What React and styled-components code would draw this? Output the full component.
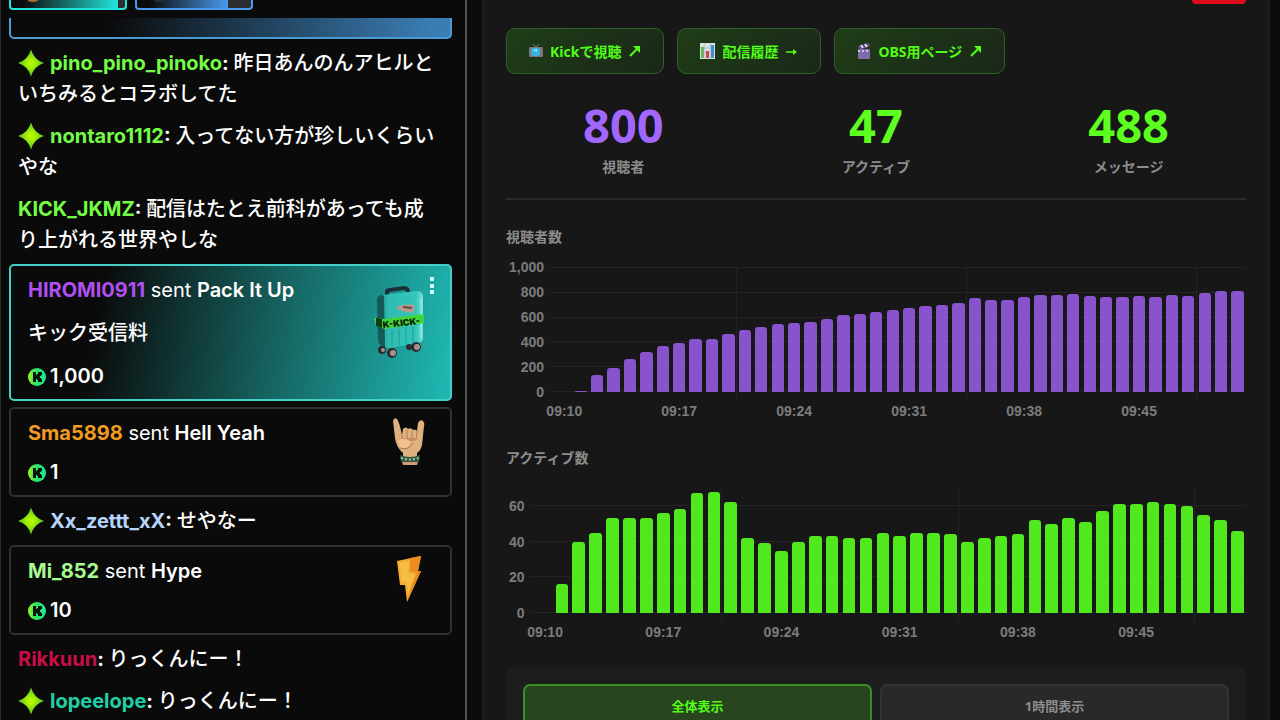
import React from 'react';
import styled, { createGlobalStyle } from 'styled-components';

const GlobalStyle = createGlobalStyle`
  * {
    box-sizing: border-box;
  }

  body {
    margin: 0;
    background: #0b0b0d;
    overflow: hidden;
  }
`;

const Page = styled.div`
  display: flex;
  height: 100vh;
  overflow: hidden;
`;

/* chat column */

const Chat = styled.aside`
  flex: 0 0 467px;
  display: flex;
  flex-direction: column;
  height: 100%;
  overflow: hidden;
  padding: 0 13px 0 8px;
  background: #0a0a0a;
  border-left: 1px solid #2a2a2c;
  border-right: 2px solid #515154;
  color: #fff;
  font-family: Inter, 'Noto Sans CJK JP', sans-serif;
  font-size: 20px;
  line-height: 31px;
`;

const PinRow = styled.div`
  display: flex;
  flex: none;
  gap: 8px;
  height: 10px;
`;

const Pin = styled.div`
  display: flex;
  align-items: flex-end;
  width: 118px;
  overflow: hidden;
  border: 2px solid ${({ $color }) => $color};
  border-top: 0;
  border-radius: 0 0 4px 4px;
  background: linear-gradient(to right, #0a0a0a 10%, ${({ $color }) => $color} ${({ $fill }) => $fill}%, #2b2d31 ${({ $fill }) => $fill}%);
`;

const PinAvatar = styled.span`
  width: 14px;
  height: 6px;
  margin: 0 0 6px 15px;
  border-radius: 0 0 7px 7px;
  background: ${({ $color }) => $color};
`;

const CutCard = styled.div`
  flex: none;
  height: 21px;
  margin: 8px 0 3px;
  border: 2px solid #4a9bd4;
  border-top: 0;
  border-radius: 0 0 5px 5px;
  background: linear-gradient(to right, #0a0a0a 22%, #3a7db4 96%);
`;

const Message = styled.p`
  flex: none;
  margin: 0;
  padding: 6px 9px 5px;
  font-weight: 500;
`;

const Name = styled.span`
  color: ${({ $color }) => $color};
  font-weight: 700;
`;

const Colon = styled.span`
  font-weight: 700;
`;

const Star = styled.svg`
  width: 26px;
  height: 28px;
  margin-right: 6px;
  vertical-align: -7px;
`;

const Gift = styled.article`
  flex: none;
  display: flex;
  justify-content: space-between;
  margin: 3px 0;
  padding: 9px 16px 7px 17px;
  border: 2px solid ${({ $featured }) => ($featured ? '#45cfc8' : '#303032')};
  border-radius: 5px;
  background: ${({ $featured }) => ($featured ? 'linear-gradient(100deg, #0a0a0a 20%, #155e5b 58%, #1fb5b0 98%)' : 'transparent')};
`;

const GiftText = styled.div`
  display: flex;
  flex-direction: column;
  gap: ${({ $wide }) => ($wide ? 12 : 8)}px;

  p {
    margin: 0;
    font-weight: 500;
  }

  strong {
    font-weight: 600;
  }
`;

const Sent = styled.span`
  font-weight: 400;
`;

const Amount = styled.p`
  display: flex;
  align-items: center;
  gap: 4px;

  && {
    font-weight: 600;
  }
`;

const GiftArt = styled.div`
  display: flex;
  justify-content: center;
  min-width: 50px;

  svg {
    flex: none;
  }
`;

const FeaturedArt = styled.div`
  display: flex;
  align-items: flex-start;
  gap: 4px;

  > svg {
    flex: none;
    margin-top: 11px;
  }
`;

const MoreButton = styled.button`
  display: flex;
  padding: 2px 0;
  border: 0;
  background: none;
`;

/* stats column */

const Main = styled.main`
  flex: 1;
  min-width: 0;
  padding: 0 10px 0 15px;
`;

const Panel = styled.section`
  display: flex;
  flex-direction: column;
  height: 100%;
  padding: 0 23px;
  border: solid #222;
  border-width: 0 1px;
  background: #171717;
  color: #8c8c8c;
  font-family: 'Noto Sans', 'Noto Sans CJK JP', sans-serif;
  font-size: 14px;
  font-weight: 700;
`;

const LiveBadge = styled.div`
  flex: none;
  align-self: flex-end;
  width: 54px;
  height: 4px;
  border-radius: 0 0 5px 5px;
  background: #e00b1c;
`;

const Links = styled.nav`
  display: flex;
  gap: 13px;
  margin-top: 24px;
`;

const LinkButton = styled.a`
  display: flex;
  align-items: center;
  gap: 7px;
  height: 46px;
  padding: 0 22px;
  border: 1px solid #30602a;
  border-radius: 9px;
  background: linear-gradient(135deg, #1f3d17, #1a2718);
  color: #53fc18;
  text-decoration: none;
  white-space: nowrap;
`;

const Arrow = styled.svg`
  width: 12px;
  height: 12px;
  margin-left: 1px;
`;

const Stats = styled.dl`
  display: grid;
  grid-template-columns: repeat(3, 1fr);
  gap: 18px;
  margin: 22px 0 0;
  padding-bottom: 20px;
  border-bottom: 2px solid #2a2a2a;
  text-align: center;
`;

const Stat = styled.div`
  display: flex;
  flex-direction: column-reverse;

  dt {
    line-height: 22px;
  }

  dd {
    margin: 0 0 2px;
    color: ${({ $color }) => $color};
    font-size: 47px;
    line-height: 58px;
  }
`;

const ChartTitle = styled.h2`
  margin: 26px 0 19px;
  color: #8c8c8c;
  font-size: 14px;
  line-height: 22px;
`;

const Chart = styled.div`
  display: grid;
  grid-template-columns: auto 1fr;
  grid-template-rows: 125px auto;
  column-gap: 12px;
  color: #7c7c7c;
  font-family: 'Liberation Sans', sans-serif;
  font-size: 14px;
  padding-left: 3px;
`;

const Scale = styled.div`
  display: flex;
  flex-direction: column;
  text-align: right;
`;

const ScaleStep = styled.div`
  flex: ${({ $size }) => $size} 0 0;
  line-height: 0;
`;

const Plot = styled.div`
  display: grid;

  > * {
    grid-area: 1 / 1;
  }
`;

const GridRows = styled.div`
  display: flex;
  flex-direction: column;
  margin-left: -7px;
`;

const GridRow = styled.div`
  flex: ${({ $size }) => $size} 0 0;
  border-top: ${({ $line }) => ($line ? '1px solid #232323' : '0')};
`;

const Columns = styled.div`
  display: flex;
`;

const Slot = styled.div`
  flex: 1 0 0;
  display: flex;
  align-items: flex-end;
  justify-content: center;
`;

const GuideSlot = styled.div`
  flex: 1 0 0;
  margin-bottom: -8px;
  box-shadow: ${({ $line }) => ($line ? '-1px 0 #232323' : 'none')};
`;

const Bar = styled.div`
  width: 75%;
  border-radius: 3px 3px 0 0;
  background: ${({ $color }) => $color};
`;

const TimeAxis = styled.div`
  grid-column: 2;
  display: flex;
  padding-top: 9px;
  line-height: 20px;
`;

const TimeSlot = styled.div`
  flex: 1 0 0;
  width: 0;
  display: flex;
  justify-content: center;
  white-space: nowrap;
`;

const RangeBox = styled.div`
  flex: none;
  display: flex;
  gap: 8px;
  margin-top: 25px;
  padding: 17px 17px 24px;
  border-radius: 8px;
  background: #1d1d1d;
`;

const RangeButton = styled.button`
  flex: 1;
  height: 42px;
  border: 2px solid ${({ $active }) => ($active ? '#388f20' : '#343434')};
  border-radius: 7px;
  background: ${({ $active }) => ($active ? '#28451f' : '#292929')};
  color: ${({ $active }) => ($active ? '#53fc18' : '#8c8c8c')};
  font: inherit;
  font-size: 13px;
`;

const viewers = [
  0, 6, 139, 195, 264, 317, 368, 392, 421, 421, 467, 493, 520, 541, 555, 563, 581, 616, 627, 637, 659,
  672, 685, 699, 712, 749, 739, 739, 763, 773, 773, 781, 771, 763, 763, 768, 763, 773, 771, 789, 807, 807,
];

const active = [
  0, 16, 40, 45, 53, 53, 53, 56, 58, 67, 68, 62, 42, 39, 35, 40, 43, 43, 42, 42, 45,
  43, 45, 45, 44, 40, 42, 43, 44, 52, 50, 53, 51, 57, 61, 61, 62, 61, 60, 55, 52, 46,
];

const timeLabel = (index) => `09:${10 + index}`;

const BarChart = ({ data, color, max, step }) => {
  const ticks = [];
  for (let value = Math.floor(max / step) * step; value >= 0; value -= step) {
    ticks.push(value);
  }
  const rest = max - ticks[0];

  return (
    <Chart>
      <Scale>
        {rest > 0 ? <ScaleStep $size={rest} /> : ''}
        {ticks.map((value) => (
          <ScaleStep key={value} $size={value === 0 ? 0 : step}>{value.toLocaleString('en-US')}</ScaleStep>
        ))}
      </Scale>
      <Plot>
        <GridRows>
          {rest > 0 ? <GridRow $size={rest} /> : ''}
          {ticks.map((value) => (
            <GridRow key={value} $line $size={value === 0 ? 0 : step} />
          ))}
        </GridRows>
        <Columns>
          {data.map((value, index) => (
            <GuideSlot key={timeLabel(index)} $line={index % 14 === 11} />
          ))}
        </Columns>
        <Columns>
          {data.map((value, index) => (
            <Slot key={timeLabel(index)}>
              <Bar $color={color} style={{ height: `${(value / max) * 100}%` }} />
            </Slot>
          ))}
        </Columns>
      </Plot>
      <TimeAxis>
        {data.map((value, index) => (
          <TimeSlot key={timeLabel(index)}>{index % 7 === 0 ? timeLabel(index) : ''}</TimeSlot>
        ))}
      </TimeAxis>
    </Chart>
  );
};

const StarBadge = () => (
  <Star viewBox="0 0 26 28">
    <defs>
      <radialGradient id="star">
        <stop offset="0.2" stopColor="#b4f500" />
        <stop offset="1" stopColor="#4fc52a" />
      </radialGradient>
    </defs>
    <path d="M13 0.5 Q16 11 26 14 Q16 17 13 27.5 Q10 17 0 14 Q10 11 13 0.5Z" fill="url(#star)" />
  </Star>
);

const Coin = () => (
  <svg width="18" height="18" viewBox="0 0 18 18">
    <defs>
      <linearGradient id="coin">
        <stop offset="0" stopColor="#a4f02c" />
        <stop offset="0.4" stopColor="#2fe95c" />
        <stop offset="1" stopColor="#1be3a2" />
      </linearGradient>
    </defs>
    <circle cx="9" cy="9" r="9" fill="url(#coin)" />
    <path d="M5 4h3v3h1V6h1V4h4v3h-1v1h-1v2h1v1h1v3h-4v-2H9v-1H8v3H5Z" fill="#07150b" />
  </svg>
);

const Suitcase = () => (
  <svg width="52" height="72" viewBox="0 0 52 72">
    <defs>
      <linearGradient id="shell">
        <stop offset="0" stopColor="#1c8f88" />
        <stop offset="0.25" stopColor="#2fbcb1" />
        <stop offset="0.85" stopColor="#33c6bb" />
        <stop offset="1" stopColor="#7ce0d6" />
      </linearGradient>
    </defs>
    <path d="M13 10V6q0-2 3-2l14-2q4 0 4 4" fill="none" stroke="#1b3036" strokeWidth="4" />
    <path d="M3 14q0-5 5-5l35-4q6 0 6 6v41q0 4-5 5l-28 5q-4 0-8-2-4-2-4-6Z" fill="url(#shell)" />
    <path d="M3 14q0-5 5-5l2 1 1 51q-6-1-7-6Z" fill="#125b57" />
    <path d="M18 44v16M25 43v16M32 41v16M39 40v16" stroke="#219a92" strokeWidth="1" />
    <path d="M47 12v40" stroke="#a4eee6" strokeWidth="1" />
    <path d="M23 20l15-2 3 3-2 6-7-1-9-3Z" fill="#b59c8f" />
    <path d="M29 21l9 1" stroke="#5e4844" strokeWidth="2" />
    <path d="M0 32l10 1 40-5v9l-39 6-9-3Z" fill="#41d637" />
    <path d="M2 32l6 1v9l-6-2Z" fill="#0d3c19" />
    <text x="9" y="42" transform="rotate(-6 9 42)" fill="#0b2110" fontFamily="Inter, sans-serif" fontSize="9" fontWeight="900">K-KICK-</text>
    <g fill="#282c30">
      <ellipse cx="8" cy="64" rx="4" ry="4" />
      <ellipse cx="18" cy="67" rx="5" ry="5" />
      <ellipse cx="35" cy="61" rx="3" ry="3" />
      <ellipse cx="42" cy="61" rx="5" ry="5" />
    </g>
    <g fill="#a4928b">
      <circle cx="9" cy="64" r="2" />
      <circle cx="19" cy="67" r="3" />
      <circle cx="43" cy="61" r="3" />
    </g>
  </svg>
);

const Horns = () => (
  <svg width="34" height="48" viewBox="0 0 34 48">
    <path d="M1 3q1-4 4-2 2 2 5 16l1-6q3-3 5 0 3-2 5 1 3-1 4 1l1-8q2-4 5-2 2 2 1 5l-2 19q-1 5-5 8v5H11v-5Q4 29 3 20Z" fill="#deb17f" />
    <path d="M15 12v9M20 13v9M25 13l-1 9M10 17v5" fill="none" stroke="#b87650" strokeWidth="1" />
    <path d="M10 20h14l-2 3H10Z" fill="#cd8a62" />
    <path d="M6 23q5-4 10-1 4 1 2 5-4 5-10 3Z" fill="#eec18f" />
    <path d="M8 30q8 3 13-5" fill="none" stroke="#b0764f" />
    <path d="M8 37q10 4 20 0l-1 7q-9 3-18 0Z" fill="#2f5b42" />
    <path d="M9 40q9 3 18 0" fill="none" stroke="#b1c4a2" strokeWidth="2" strokeDasharray="2 2" />
    <path d="M10 44h16l-1 3H11Z" fill="#d59a71" />
  </svg>
);

const Bolt = () => (
  <svg width="24" height="46" viewBox="0 0 24 46">
    <path d="M0 5l24-5-3 15h3L10 46 8 29H3Z" fill="#f4ad2c" />
    <path d="M13 2l11-2-3 15h3L10 46l5-18 5-11-7-2Z" fill="#ea8c20" />
    <path d="M2 7l10-2-1 12 7 2-7 19-1-12H5Z" fill="#f5bd45" />
  </svg>
);

const Dots = () => (
  <svg width="4" height="18" viewBox="0 0 4 18" fill="#d9fffb">
    <rect x="0" y="0" width="4" height="4" rx="1" />
    <rect x="0" y="7" width="4" height="4" rx="1" />
    <rect x="0" y="13" width="4" height="4" rx="1" />
  </svg>
);

const TvIcon = () => (
  <svg width="14" height="16" viewBox="0 0 14 16">
    <path d="M4 1l3 3 3-3" fill="none" stroke="#76808a" />
    <rect y="4" width="14" height="10" rx="1" fill="#7c7479" />
    <rect x="2" y="5" width="9" height="8" rx="2" fill="#39b2e5" />
    <path d="M4 7l4-1v3Z" fill="#9ce4fa" />
  </svg>
);

const GraphIcon = () => (
  <svg width="15" height="16" viewBox="0 0 15 16">
    <rect width="15" height="16" fill="#dce4e6" />
    <path d="M5 0v16M10 0v16M0 5h15M0 10h15" stroke="#b4c0c4" strokeWidth="1" />
    <rect x="1" y="4" width="3" height="11" fill="#63b75a" />
    <rect x="6" y="8" width="3" height="7" fill="#d9414f" />
    <rect x="11" y="2" width="3" height="13" fill="#3a8fd6" />
  </svg>
);

const ClapperIcon = () => (
  <svg width="14" height="16" viewBox="0 0 14 16">
    <path d="M1 3l11-3 1 3-11 4Z" fill="#5c4f86" />
    <path d="M4 2l2 3M8 1l2 3" stroke="#e0daf2" strokeWidth="2" />
    <rect x="1" y="6" width="12" height="10" rx="1" fill="#7e6cab" />
    <path d="M1 8h12" stroke="#cfc7ea" strokeWidth="2" strokeDasharray="2 2" />
  </svg>
);

const UpArrow = () => (
  <Arrow viewBox="0 0 12 12">
    <path d="M1 11L9 3" fill="none" stroke="#53fc18" strokeWidth="2.2" />
    <path d="M4 1h7v7L9 6 6 3Z" fill="#53fc18" />
  </Arrow>
);

const RightArrow = () => (
  <Arrow viewBox="0 0 12 12">
    <path d="M0 7h9" fill="none" stroke="#53fc18" strokeWidth="1.5" />
    <path d="M7 4l4 3-4 3Z" fill="#53fc18" />
  </Arrow>
);

const App = () => (
  <Page>
    <GlobalStyle />
    <Chat>
      <PinRow>
        <Pin $color="#22e6dc" $fill={94}><PinAvatar $color="#a86f35" /></Pin>
        <Pin $color="#4a9bee" $fill={80}><PinAvatar $color="#173a2a" /></Pin>
      </PinRow>
      <CutCard />
      <Message>
        <StarBadge />
        <Name $color="#75fd46">pino_pino_pinoko</Name>
        <Colon>: </Colon>
        昨日あんのんアヒルといちみるとコラボしてた
      </Message>
      <Message>
        <StarBadge />
        <Name $color="#75fd46">nontaro1112</Name>
        <Colon>: </Colon>
        入ってない方が珍しいくらいやな
      </Message>
      <Message>
        <Name $color="#75fd46">KICK_JKMZ</Name>
        <Colon>: </Colon>
        配信はたとえ前科があっても成り上がれる世界やしな
      </Message>
      <Gift $featured>
        <GiftText $wide>
          <p>
            <Name $color="#b04ff0">HIROMI0911</Name>
            <Sent> sent </Sent>
            <strong>Pack It Up</strong>
          </p>
          <p>キック受信料</p>
          <Amount>
            <Coin />
            1,000
          </Amount>
        </GiftText>
        <FeaturedArt>
          <Suitcase />
          <MoreButton type="button" aria-label="More"><Dots /></MoreButton>
        </FeaturedArt>
      </Gift>
      <Gift>
        <GiftText>
          <p>
            <Name $color="#f09b22">Sma5898</Name>
            <Sent> sent </Sent>
            <strong>Hell Yeah</strong>
          </p>
          <Amount>
            <Coin />
            1
          </Amount>
        </GiftText>
        <GiftArt><Horns /></GiftArt>
      </Gift>
      <Message>
        <StarBadge />
        <Name $color="#b8d4fb">Xx_zettt_xX</Name>
        <Colon>: </Colon>
        せやなー
      </Message>
      <Gift>
        <GiftText>
          <p>
            <Name $color="#a5fb8f">Mi_852</Name>
            <Sent> sent </Sent>
            <strong>Hype</strong>
          </p>
          <Amount>
            <Coin />
            10
          </Amount>
        </GiftText>
        <GiftArt><Bolt /></GiftArt>
      </Gift>
      <Message>
        <Name $color="#c90d47">Rikkuun</Name>
        <Colon>: </Colon>
        りっくんにー！
      </Message>
      <Message>
        <StarBadge />
        <Name $color="#22cfa5">lopeelope</Name>
        <Colon>: </Colon>
        りっくんにー！
      </Message>
    </Chat>
    <Main>
      <Panel>
        <LiveBadge />
        <Links>
          <LinkButton href="#kick">
            <TvIcon />
            Kickで視聴
            <UpArrow />
          </LinkButton>
          <LinkButton href="#history">
            <GraphIcon />
            配信履歴
            <RightArrow />
          </LinkButton>
          <LinkButton href="#obs">
            <ClapperIcon />
            OBS用ページ
            <UpArrow />
          </LinkButton>
        </Links>
        <Stats>
          <Stat $color="#a267ff">
            <dt>視聴者</dt>
            <dd>800</dd>
          </Stat>
          <Stat $color="#5dff20">
            <dt>アクティブ</dt>
            <dd>47</dd>
          </Stat>
          <Stat $color="#5dff20">
            <dt>メッセージ</dt>
            <dd>488</dd>
          </Stat>
        </Stats>
        <ChartTitle>視聴者数</ChartTitle>
        <BarChart data={viewers} color="#8953cd" max={1000} step={200} />
        <ChartTitle>アクティブ数</ChartTitle>
        <BarChart data={active} color="#51e91e" max={70} step={20} />
        <RangeBox>
          <RangeButton type="button" $active>全体表示</RangeButton>
          <RangeButton type="button">1時間表示</RangeButton>
        </RangeBox>
      </Panel>
    </Main>
  </Page>
);

export default App;
